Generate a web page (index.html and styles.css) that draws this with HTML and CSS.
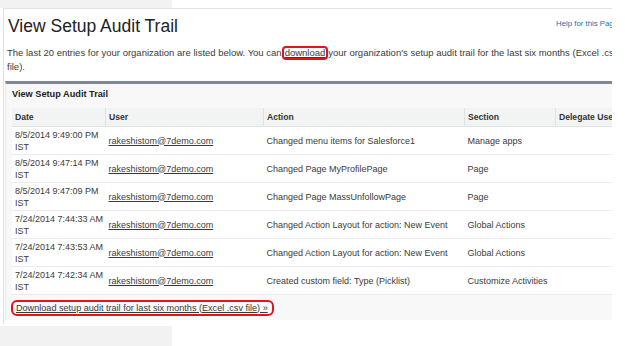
FILE: index.html
```html
<!DOCTYPE html>
<html lang="en">
<head>
    <meta charset="UTF-8">
    <title>View Setup Audit Trail</title>
    <link rel="stylesheet" href="styles.css">
</head>
<body>
    <div class="strip top-strip"></div>

    <div class="page">
        <!-- Page title -->
        <div class="title-row">
            <h1>View Setup Audit Trail</h1>
            <a href="#" class="help">Help for this Page</a>
        </div>

        <p class="intro">The last 20 entries for your organization are listed below. You can<span class="mark"><a href="#">download</a></span>your organization's setup audit trail for the last six months (Excel .csv file).</p>

        <!-- Audit trail block -->
        <div class="block">
            <h2>View Setup Audit Trail</h2>
            <table class="list">
                <tr class="head">
                    <th class="c-date">Date</th>
                    <th class="c-user">User</th>
                    <th class="c-action">Action</th>
                    <th class="c-section">Section</th>
                    <th class="c-delegate">Delegate User</th>
                </tr>
                <tr>
                    <td>8/5/2014 9:49:00 PM IST</td>
                    <td><a href="#">rakeshistom@7demo.com</a></td>
                    <td>Changed menu items for Salesforce1</td>
                    <td>Manage apps</td>
                    <td></td>
                </tr>
                <tr>
                    <td>8/5/2014 9:47:14 PM IST</td>
                    <td><a href="#">rakeshistom@7demo.com</a></td>
                    <td>Changed Page MyProfilePage</td>
                    <td>Page</td>
                    <td></td>
                </tr>
                <tr>
                    <td>8/5/2014 9:47:09 PM IST</td>
                    <td><a href="#">rakeshistom@7demo.com</a></td>
                    <td>Changed Page MassUnfollowPage</td>
                    <td>Page</td>
                    <td></td>
                </tr>
                <tr>
                    <td>7/24/2014 7:44:33 AM IST</td>
                    <td><a href="#">rakeshistom@7demo.com</a></td>
                    <td>Changed Action Layout for action: New Event</td>
                    <td>Global Actions</td>
                    <td></td>
                </tr>
                <tr>
                    <td>7/24/2014 7:43:53 AM IST</td>
                    <td><a href="#">rakeshistom@7demo.com</a></td>
                    <td>Changed Action Layout for action: New Event</td>
                    <td>Global Actions</td>
                    <td></td>
                </tr>
                <tr>
                    <td>7/24/2014 7:42:34 AM IST</td>
                    <td><a href="#">rakeshistom@7demo.com</a></td>
                    <td>Created custom field: Type (Picklist)</td>
                    <td>Customize Activities</td>
                    <td></td>
                </tr>
            </table>
            <div class="block-foot">
                <span class="mark wide"><a href="#">Download setup audit trail for last six months (Excel .csv file) &raquo;</a></span>
            </div>
        </div>
    </div>

    <div class="strip bottom-strip"></div>
</body>
</html>
```

FILE: styles.css
```css
body {
    font-family: 'Liberation Sans', Arial, sans-serif;
    margin: 0;
    padding: 0;
    background-color: #fff;
    color: #3a3a3a;
    font-size: 9px;
}

a {
    color: #3a3a3a;
}

/* Grey bits of the screen behind the page */
.strip {
    width: 172px;
    background-color: #f2f2f2;
}

.top-strip {
    height: 8px;
}

.bottom-strip {
    height: 20px;
    margin-top: 2px;
}

/* Page */
.page {
    margin-left: 3px;
    width: 609px;
    height: 316px;
    border-top: 1px solid #e2e2e2;
    border-left: 1px solid #e2e2e2;
    overflow: hidden;
    box-sizing: border-box;
}

.title-row {
    display: flex;
    align-items: flex-start;
    padding: 6px 0 0 4px;
}

h1 {
    margin: 0;
    font-size: 17.5px;
    font-weight: normal;
    color: #222;
    line-height: 22px;
}

.help {
    margin-left: auto;
    margin-right: -6px;
    margin-top: 4px;
    color: #1b6fb4;
    text-decoration: none;
    font-size: 7.8px;
}

.intro {
    margin: 9px 0 0 3px;
    line-height: 13px;
    font-size: 9.5px;
    width: 625px;
}

.mark {
    display: inline-block;
    border: 2px solid #e3131c;
    border-radius: 4px;
    padding: 0 1px;
    line-height: 10px;
}

/* Audit trail block */
.block {
    margin: 8px 0 0 1px;
    width: 680px;
    background-color: #f8f8f8;
    border-top: 3px solid #7f8797;
    border-left: 1px solid #e8e8e8;
}

h2 {
    margin: 0;
    padding: 5px 0 0 6px;
    height: 19px;
    font-size: 9.2px;
    font-weight: bold;
    color: #222;
}

.list {
    margin-left: 6px;
    border-collapse: collapse;
    background-color: #fff;
    width: 674px;
}

.list th {
    background-color: #f2f3f3;
    height: 18px;
    padding: 0 0 0 3px;
    text-align: left;
    font-size: 8.6px;
    font-weight: bold;
    color: #333;
    border-left: 1px solid #e0e3e5;
    border-bottom: 1px solid #e0e3e5;
}

.list th:first-child {
    border-left: none;
}

.list td {
    height: 27px;
    padding: 0 0 0 3px;
    border-bottom: 1px solid #ebebeb;
    font-size: 9px;
    line-height: 12px;
    vertical-align: middle;
}

.c-date { width: 90px; }
.c-user { width: 154px; }
.c-action { width: 197px; }
.c-section { width: 87px; }

.block-foot {
    height: 25px;
    display: flex;
    align-items: center;
    padding-left: 5px;
}

.mark.wide {
    padding: 1px 4px 1px 3px;
    border-radius: 6px;
    font-size: 9.1px;
}
```
